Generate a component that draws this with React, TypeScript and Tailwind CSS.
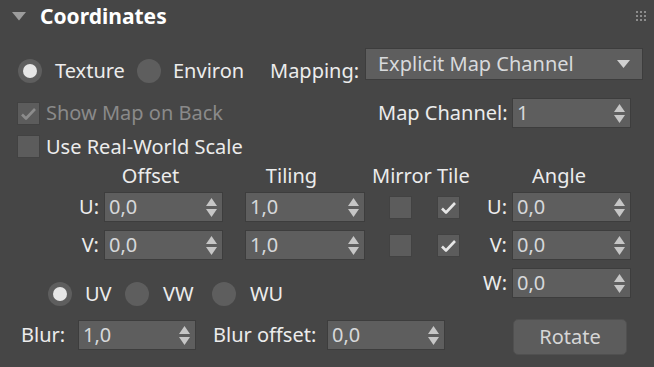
import React from "react";

const Arrows = () => (
  <svg width="11" height="19" viewBox="0 0 11 19" className="shrink-0">
    <polygon points="0,8 5.5,0 11,8" fill="#c6c6c6" />
    <polygon points="0,11 11,11 5.5,19" fill="#c6c6c6" />
  </svg>
);

const Spinner = ({ value, w }: { value: string; w: string }) => (
  <div
    className={`${w} h-[30px] shrink-0 flex items-center justify-between bg-[#5e5e5e] border border-[#3d3d3d] pl-[4px] pr-[5px] text-[#d6d8da]`}
  >
    <span className="leading-none">{value}</span>
    <Arrows />
  </div>
);

const Check = ({ checked, dim }: { checked?: boolean; dim?: boolean }) => (
  <div className="w-[23px] h-[23px] shrink-0 bg-[#5c5c5c] border border-[#424242] flex items-center justify-center">
    {checked && (
      <svg width="15" height="13" viewBox="0 0 15 13">
        <path
          d="M1 7.5 L5 11.5 L14 2"
          fill="none"
          stroke={dim ? "#8c8c8c" : "#e6e6e6"}
          strokeWidth="2.6"
          strokeLinejoin="round"
        />
      </svg>
    )}
  </div>
);

const Radio = ({ checked }: { checked?: boolean }) => (
  <div className="w-[24px] h-[24px] shrink-0 rounded-full bg-[#5e5e5e] flex items-center justify-center">
    {checked && <div className="w-[14px] h-[14px] rounded-full bg-[#e6e6e6]" />}
  </div>
);

export default function App() {
  return (
    <div className="w-[654px] h-[367px] bg-[#464646] overflow-hidden text-[20px] leading-none text-[#ececec] font-['Segoe_UI','Noto_Sans',sans-serif] select-none">
      {/* Title */}
      <div className="h-[32px] flex items-center">
        <svg width="14" height="9" viewBox="0 0 14 9" className="ml-[12px]">
          <polygon points="0,0 14,0 7,8.5" fill="#9c9c9c" />
        </svg>
        <span className="ml-[14px] font-bold text-[21px] text-white">Coordinates</span>
        <div className="ml-auto mr-[8px] grid grid-cols-3 gap-[2px]">
          {Array.from({ length: 9 }).map((_, i) => (
            <div key={i} className="w-[2px] h-[2px] bg-[#8c8c8c]" />
          ))}
        </div>
      </div>

      {/* Row 1 */}
      <div className="mt-[16px] flex items-start">
        <div className="mt-[11px] h-[24px] flex items-center ml-[18px]">
          <Radio checked />
          <span className="ml-[13px] w-[82px]">Texture</span>
          <Radio />
          <span className="ml-[12px] w-[97px]">Environ</span>
          <span className="w-[95px]">Mapping:</span>
        </div>
        <div className="w-[278px] h-[32px] bg-[#5e5e5e] border border-[#3d3d3d] flex items-center justify-between pl-[12px] pr-[12px] text-[#d8dadc]">
          <span>Explicit Map Channel</span>
          <svg width="13" height="8" viewBox="0 0 13 8">
            <polygon points="0,0 13,0 6.5,8" fill="#d0d0d0" />
          </svg>
        </div>
      </div>

      {/* Row 2 */}
      <div className="mt-[15px] h-[30px] flex items-center">
        <div className="ml-[17px] w-[361px] flex items-center">
          <Check checked dim />
          <span className="ml-[6px] text-[#8a8a8a]">Show Map on Back</span>
        </div>
        <span className="w-[134px]">Map Channel:</span>
        <Spinner value="1" w="w-[119px]" />
      </div>

      {/* Row 3 */}
      <div className="mt-[7px] h-[23px] flex items-center ml-[17px]">
        <Check />
        <span className="ml-[6px]">Use Real-World Scale</span>
      </div>

      {/* Main grid */}
      <div className="mt-[7px] flex">
        {/* Left */}
        <div className="w-[470px] shrink-0">
          <div className="h-[22px] flex items-center">
            <span className="ml-[78px] w-[145px] text-center">Offset</span>
            <span className="w-[137px] text-center">Tiling</span>
            <span className="ml-[12px]">Mirror Tile</span>
          </div>
          {["U:", "V:"].map((l, i) => (
            <div key={l} className={`${i === 0 ? "mt-[5px]" : "mt-[8px]"} h-[30px] flex items-center`}>
              <span className="w-[104px] text-right pr-[5px]">{l}</span>
              <Spinner value="0,0" w="w-[119px]" />
              <div className="ml-[22px]">
                <Spinner value="1,0" w="w-[120px]" />
              </div>
              <div className="ml-[24px]">
                <Check />
              </div>
              <div className="ml-[25px]">
                <Check checked />
              </div>
            </div>
          ))}
          <div className="mt-[22px] h-[24px] flex items-center ml-[48px]">
            <Radio checked />
            <span className="ml-[13px] w-[40px]">UV</span>
            <Radio />
            <span className="ml-[14px] w-[49px]">VW</span>
            <Radio />
            <span className="ml-[14px]">WU</span>
          </div>
          <div className="mt-[14px] h-[30px] flex items-center">
            <span className="ml-[21px] w-[57px]">Blur:</span>
            <Spinner value="1,0" w="w-[118px]" />
            <span className="ml-[17px] w-[114px]">Blur offset:</span>
            <Spinner value="0,0" w="w-[118px]" />
          </div>
        </div>

        {/* Right */}
        <div className="w-[161px] shrink-0">
          <div className="h-[22px] flex items-center">
            <span className="ml-[17px] w-[144px] text-center">Angle</span>
          </div>
          {["U:", "V:", "W:"].map((l, i) => (
            <div key={l} className={`${i === 0 ? "mt-[5px]" : "mt-[8px]"} h-[30px] flex items-center`}>
              <span className="w-[42px] text-right pr-[5px]">{l}</span>
              <Spinner value="0,0" w="w-[119px]" />
            </div>
          ))}
          <div className="mt-[21px] ml-[43px] w-[114px] h-[36px] rounded-[5px] bg-[#5c5c5c] border border-[#505050] flex items-center justify-center text-[#d6d6d6]">
            Rotate
          </div>
        </div>
      </div>
    </div>
  );
}
